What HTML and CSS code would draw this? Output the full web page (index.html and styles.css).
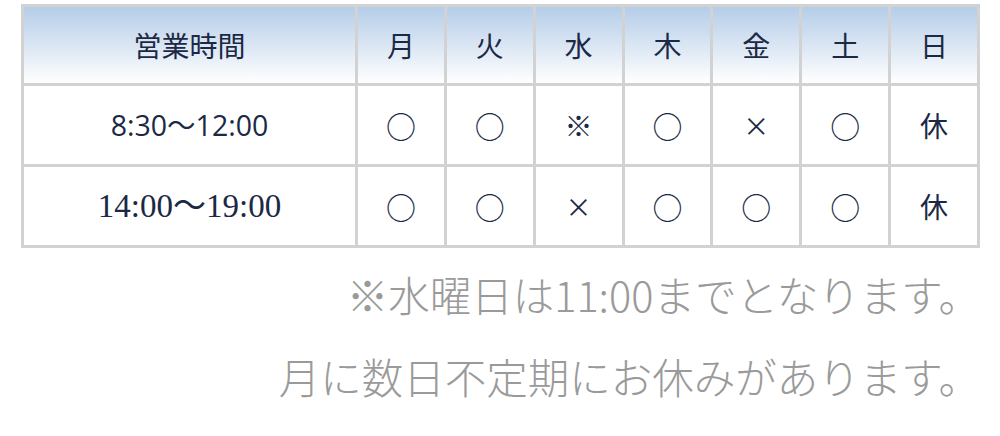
FILE: index.html
```html
<!DOCTYPE html>
<html lang="ja">
<head>
<meta charset="utf-8">
<title>営業時間</title>
<link rel="stylesheet" href="styles.css">
</head>
<body>
<div class="wrap">
  <table class="hours">
    <colgroup>
      <col class="c-time">
      <col><col><col><col><col><col><col>
    </colgroup>
    <thead>
      <tr>
        <th>営業時間</th>
        <th>月</th><th>火</th><th>水</th><th>木</th><th>金</th><th>土</th><th>日</th>
      </tr>
    </thead>
    <tbody>
      <tr>
        <td class="time sans">8:30〜12:00</td>
        <td>○</td><td>○</td><td class="kome">※</td><td>○</td><td class="x">×</td><td>○</td><td class="kyu">休</td>
      </tr>
      <tr>
        <td class="time serif">14:00〜19:00</td>
        <td>○</td><td>○</td><td class="x">×</td><td>○</td><td>○</td><td>○</td><td class="kyu">休</td>
      </tr>
    </tbody>
  </table>
  <div class="notes">
    <p>※水曜日は11:00までとなります。</p>
    <p>月に数日不定期にお休みがあります。</p>
  </div>
</div>
</body>
</html>
```

FILE: styles.css
```css
html, body {
  margin: 0;
  padding: 0;
  background: #ffffff;
}

.wrap {
  padding: 4px 20px 0 21px;
  width: 959px;
}

.hours {
  width: 959px;
  table-layout: fixed;
  border-collapse: separate;
  border-spacing: 0;
  border-top: 3px solid #d2d2d2;
  border-left: 3px solid #d2d2d2;
  font-family: "Noto Sans CJK JP", "Noto Sans", sans-serif;
  color: #1b2945;
}

.c-time {
  width: 334px;
}

.hours th,
.hours td {
  border-right: 3px solid #d2d2d2;
  border-bottom: 3px solid #d2d2d2;
  text-align: center;
  vertical-align: middle;
  padding: 0;
  font-size: 30px;
  line-height: 1;
}

.hours th {
  height: 76px;
  font-size: 28px;
  font-weight: 400;
  background: linear-gradient(to bottom, #b5cde8 0%, #d6e3f2 45%, #ffffff 100%);
}

.hours td {
  height: 78px;
}

.hours td.x {
  font-size: 26px;
}

.hours td.kome {
  font-size: 28px;
}

.hours td.kyu {
  font-size: 28px;
}

.time.sans {
  font-family: "Open Sans", "Noto Sans CJK JP", sans-serif;
  font-size: 28.5px;
}

.time.serif {
  font-family: "Liberation Serif", "Noto Sans CJK JP", serif;
  font-size: 33px;
}

.notes {
  margin-top: 5px;
  text-align: right;
  font-family: "Noto Sans CJK JP", sans-serif;
  font-weight: 300;
  font-size: 41.5px;
  color: #9a9a9a;
}

.notes p {
  margin: 0;
  line-height: 82px;
}
```
